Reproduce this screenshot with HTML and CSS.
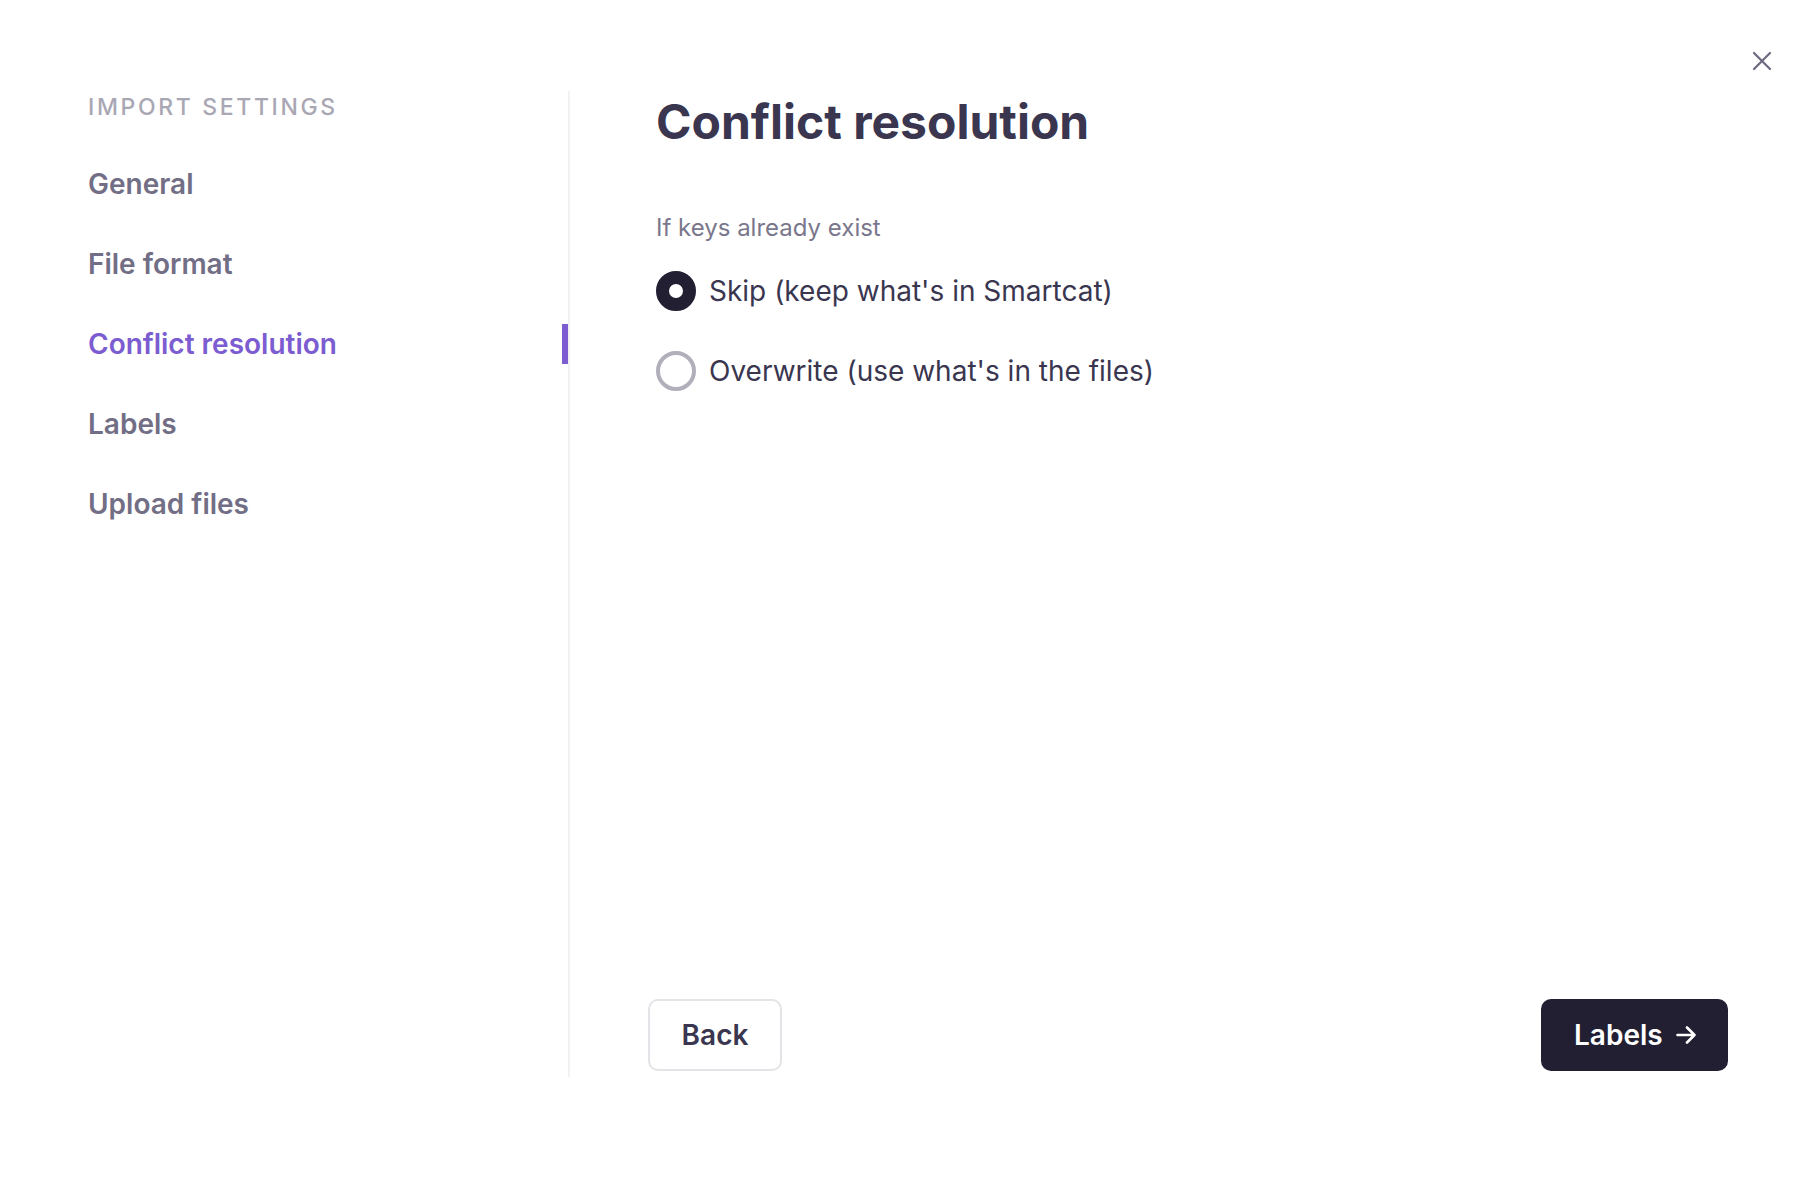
FILE: index.html
```html
<!DOCTYPE html>
<html lang="en">
<head>
<meta charset="utf-8">
<title>Import settings — Conflict resolution</title>
<link rel="stylesheet" href="styles.css">
</head>
<body>
<div class="modal">
  <button class="close" aria-label="Close">
    <svg width="24" height="24" viewBox="0 0 24 24" fill="none" stroke="#6b6880" stroke-width="2.2" stroke-linecap="round"><path d="M4 4L20 20M20 4L4 20"/></svg>
  </button>
  <aside class="sidebar">
    <div class="section-label">IMPORT SETTINGS</div>
    <nav class="nav">
      <a class="nav-item">General</a>
      <a class="nav-item">File format</a>
      <a class="nav-item active">Conflict resolution</a>
      <a class="nav-item">Labels</a>
      <a class="nav-item">Upload files</a>
    </nav>
  </aside>
  <main class="main">
    <h1 class="title">Conflict resolution</h1>
    <div class="field-label">If keys already exist</div>
    <div class="radio-group">
      <label class="radio-row"><span class="radio checked"></span><span class="radio-text">Skip (keep what's in Smartcat)</span></label>
      <label class="radio-row"><span class="radio"></span><span class="radio-text">Overwrite (use what's in the files)</span></label>
    </div>
    <div class="footer">
      <button class="btn btn-secondary">Back</button>
      <button class="btn btn-primary">Labels
        <svg width="20" height="18" viewBox="0 0 20 18" fill="none" stroke="#ffffff" stroke-width="2.6" stroke-linecap="round" stroke-linejoin="round"><path d="M1.5 9H18.5M11 1.5L18.5 9L11 16.5"/></svg>
      </button>
    </div>
  </main>
</div>
</body>
</html>
```
FILE: styles.css
```css
* { box-sizing: border-box; }
html, body {
  margin: 0;
  padding: 0;
  background: #ffffff;
}
body {
  width: 1818px;
  height: 1186px;
  overflow: hidden;
  font-family: Inter, "Noto Sans", "Liberation Sans", sans-serif;
  color: #3a3650;
}
.modal {
  position: relative;
  display: flex;
  padding-top: 91px;
  height: 1077px;
}
.close {
  position: absolute;
  left: 1750px;
  top: 49px;
  width: 24px;
  height: 24px;
  padding: 0;
  border: 0;
  background: transparent;
  display: flex;
}
.sidebar {
  width: 570px;
  flex: none;
  padding-left: 88px;
  border-right: 2px solid #f2f2f4;
}
.section-label {
  margin-top: 3px;
  font-size: 23px;
  line-height: 26px;
  font-weight: 500;
  letter-spacing: 0.115em;
  color: #a9a7b4;
}
.nav {
  margin-top: 44px;
  display: flex;
  flex-direction: column;
  gap: 40px;
}
.nav-item {
  display: block;
  font-size: 28px;
  line-height: 40px;
  height: 40px;
  font-weight: 600;
  color: #716e85;
}
.nav-item.active {
  color: #7c5cd1;
  box-shadow: inset -6px 0 0 #7c5cd1;
}
.main {
  flex: 1;
  display: flex;
  flex-direction: column;
  padding: 0 90px 6px 86px;
}
.title {
  margin: 2px 0 0;
  font-size: 48px;
  line-height: 58px;
  font-weight: 700;
  color: #3a3650;
}
.field-label {
  margin-top: 62px;
  font-size: 24px;
  line-height: 30px;
  color: #7a778c;
}
.radio-group {
  margin-top: 28px;
  display: flex;
  flex-direction: column;
  gap: 40px;
}
.radio-row {
  display: flex;
  align-items: center;
  height: 40px;
  gap: 13px;
}
.radio {
  width: 40px;
  height: 40px;
  flex: none;
  border-radius: 50%;
  border: 4px solid #b1afba;
  background: #ffffff;
}
.radio.checked {
  border: 13.5px solid #221f33;
}
.radio-text {
  font-size: 28px;
  line-height: 40px;
  color: #3a3650;
}
.footer {
  margin-top: auto;
  margin-left: -8px;
  display: flex;
  justify-content: space-between;
}
.btn {
  height: 72px;
  border-radius: 10px;
  font-family: inherit;
  font-size: 28px;
  font-weight: 600;
  display: flex;
  align-items: center;
  cursor: pointer;
}
.btn-secondary {
  width: 134px;
  justify-content: center;
  background: #ffffff;
  border: 2px solid #e4e4e8;
  color: #3a3650;
}
.btn-primary {
  width: 187px;
  padding: 0 0 0 33px;
  gap: 13px;
  background: #221f33;
  border: 0;
  color: #ffffff;
}
```
